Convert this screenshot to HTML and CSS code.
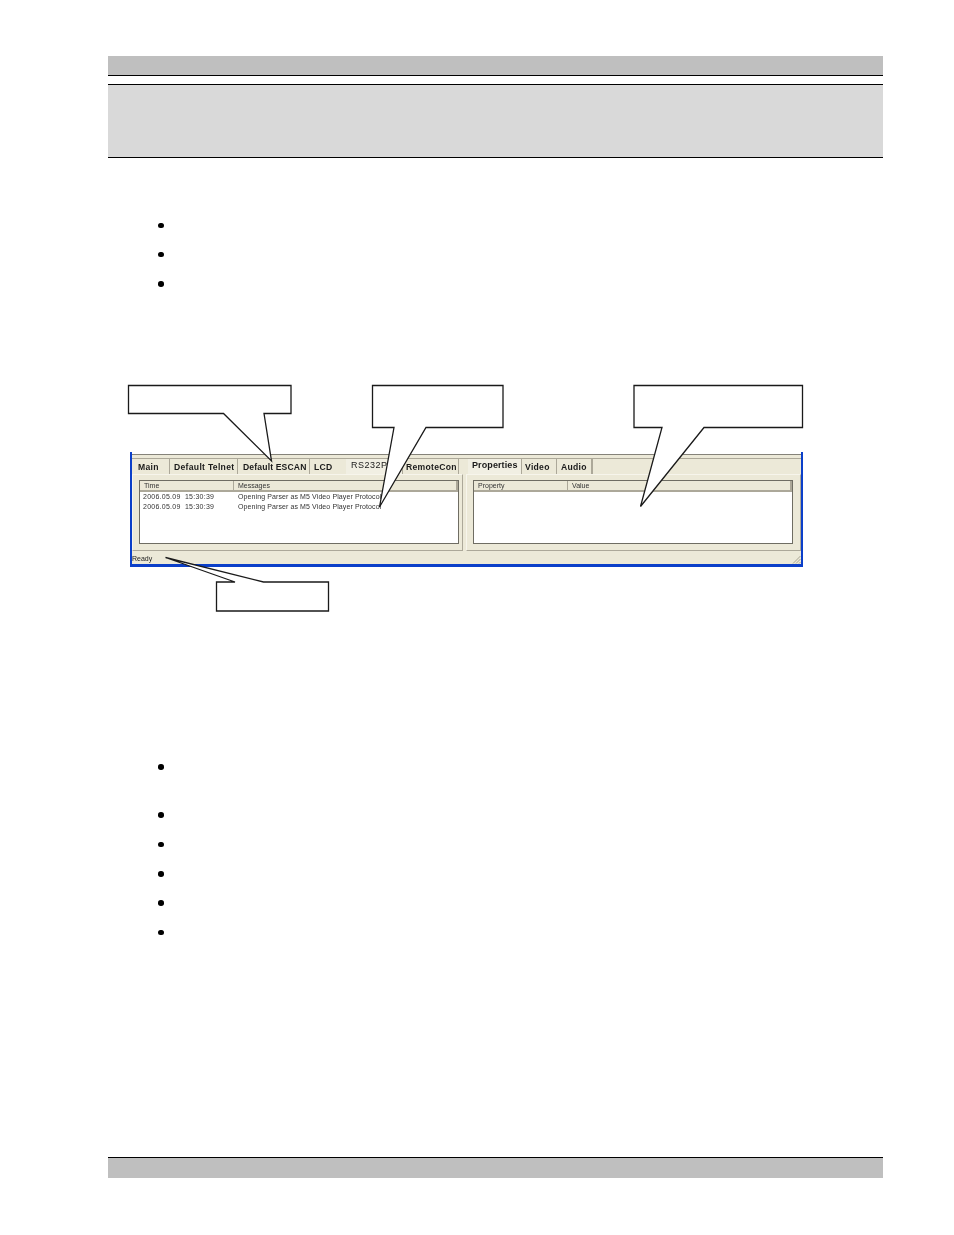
FILE: index.html
```html
<!DOCTYPE html>
<html lang="en">
<head>
<meta charset="utf-8">
<title>Manual page</title>
<link rel="stylesheet" href="styles.css">
</head>
<body>
<div class="page">
  <div class="top-bar"></div>
  <div class="title-bar"></div>

  <ul class="bullets first-list">
    <li></li>
    <li></li>
    <li></li>
  </ul>

  <div class="figure">
    <div class="window">
      <div class="window-top"></div>
      <div class="panes">
        <section class="pane pane-left">
          <div class="tabs">
            <span class="tab t-main">Main</span>
            <span class="tab t-telnet">Default Telnet</span>
            <span class="tab t-escan">Default ESCAN</span>
            <span class="tab t-lcd">LCD</span>
            <span class="tab active t-rs">RS232P</span>
            <span class="tab t-remote">RemoteCon</span>
          </div>
          <div class="frame">
            <div class="list">
              <div class="list-head">
                <span class="col col-time">Time</span>
                <span class="col">Messages</span>
              </div>
              <div class="row"><span class="col-time">2006.05.09&nbsp; 15:30:39</span><span class="msg">Opening Parser as M5 Video Player Protocol</span></div>
              <div class="row"><span class="col-time">2006.05.09&nbsp; 15:30:39</span><span class="msg">Opening Parser as M5 Video Player Protocol</span></div>
            </div>
          </div>
        </section>
        <section class="pane pane-right">
          <div class="tabs">
            <span class="tab active t-props">Properties</span>
            <span class="tab t-video">Video</span>
            <span class="tab t-audio">Audio</span>
          </div>
          <div class="frame">
            <div class="list">
              <div class="list-head">
                <span class="col col-prop">Property</span>
                <span class="col">Value</span>
              </div>
            </div>
          </div>
        </section>
      </div>
      <div class="status">
        <span class="status-text">Ready</span>
        <svg class="grip" viewBox="0 0 9 9" width="9" height="9" aria-hidden="true">
          <path d="M1 8.5 8.5 1M4 8.5 8.5 4M7 8.5 8.5 7" stroke="#a8a491" stroke-width="1" fill="none"/>
        </svg>
      </div>
    </div>
    <svg class="callouts" viewBox="0 0 775 240" width="775" height="240" aria-hidden="true">
      <path class="callout" d="M20.5 .5H183V28.5H156L163.5 76 115.5 28.5H20.5Z"/>
      <path class="callout" d="M264.5 .5H395V42.5H318L271.5 122 286 42.5H264.5Z"/>
      <path class="callout" d="M526 .5H694.5V42.5H596L532.5 121.5 554 42.5H526Z"/>
      <path class="callout" d="M108.5 197H127L57.5 172.5 155.5 197H220.5V226H108.5Z"/>
    </svg>
  </div>

  <ul class="bullets second-list">
    <li class="tall"></li>
    <li></li>
    <li></li>
    <li></li>
    <li></li>
    <li></li>
  </ul>

  <div class="bottom-bar"></div>
</div>
</body>
</html>
```

FILE: styles.css
```css
html, body {
  margin: 0;
  padding: 0;
  background: #fff;
}

body {
  font-family: "Liberation Sans", Arial, sans-serif;
  color: #000;
}

.page {
  box-sizing: border-box;
  width: 775px;
  height: 1235px;
  margin-left: 108px;
  padding-top: 56px;
  overflow: hidden;
}

.top-bar {
  height: 19px;
  background: #bfbfbf;
  border-bottom: 1px solid #000;
}

.title-bar {
  height: 72px;
  margin-top: 8px;
  background: #d9d9d9;
  border-top: 1px solid #000;
  border-bottom: 1px solid #000;
}

.bullets {
  list-style: none;
  margin: 0;
  padding: 0 0 0 50px;
}

.bullets li {
  height: 29.3px;
}

.bullets li::before {
  content: "";
  display: block;
  width: 5.6px;
  height: 5.6px;
  border-radius: 50%;
  background: #000;
}

.bullets li.tall {
  height: 48px;
}

.first-list {
  margin-top: 64.5px;
}

.second-list {
  margin-top: 152.5px;
}

.figure {
  position: relative;
  height: 227px;
  margin-top: 74.6px;
}

.callouts {
  position: absolute;
  left: 0;
  top: 0;
  overflow: visible;
}

.callout {
  fill: #fff;
  stroke: #1a1a1a;
  stroke-width: 1.3;
  stroke-linejoin: miter;
}

.window {
  box-sizing: border-box;
  width: 673px;
  height: 115px;
  margin-left: 22px;
  position: relative;
  top: 67px;
  display: flex;
  flex-direction: column;
  background: #ece9d8;
  border-left: 2px solid #0b3fc9;
  border-right: 2px solid #0b3fc9;
  border-bottom: 3px solid #0b3fc9;
  filter: blur(0.4px);
  font-size: 7px;
}

.window-top {
  height: 6px;
  background: #ece9d8;
  border-top: 2px solid #fff;
  box-shadow: inset 0 1px 0 #85837a;
  box-sizing: border-box;
}

.panes {
  display: flex;
  height: 93px;
  border-top: 1px solid #aca899;
  box-sizing: border-box;
  gap: 3px;
}

.pane-left {
  width: 331px;
}

.pane-right {
  width: 335px;
}

.tabs {
  display: flex;
  height: 15px;
  padding-left: 2px;
  box-sizing: border-box;
}

.tab {
  box-sizing: border-box;
  height: 15px;
  padding: 3.5px 0 0 4px;
  font-weight: bold;
  font-size: 8.6px;
  line-height: 11px;
  letter-spacing: .3px;
  color: #1a1a1a;
  white-space: nowrap;
  border-right: 1px solid #aca899;
}

.tab.active {
  padding-top: 1.5px;
  font-size: 9px;
  letter-spacing: .1px;
  border-right: 1px solid #aca899;
  background: #f1efe3;
}

.t-main { width: 36px; }
.t-telnet { width: 68px; }
.tab.t-escan { width: 72px; padding-left: 5px; letter-spacing: .15px; }
.t-lcd { width: 36px; border-right: 0; }
.tab.t-rs { width: 57px; padding-left: 5px; font-weight: normal; letter-spacing: .5px; }
.t-remote { width: 56px; padding-left: 3px; }

.t-props { width: 54px; padding-left: 4px; }
.t-video { width: 35px; padding-left: 3px; }
.t-audio { width: 36px; border-right: 2px solid #aca899; }

.frame {
  box-sizing: border-box;
  height: 77px;
  padding: 5px 3px 6px 6px;
  border-top: 1px solid #f7f5ec;
  border-bottom: 1px solid #aca899;
  border-right: 1px solid #aca899;
  border-left: 1px solid #f7f5ec;
}

.pane-right .frame {
  padding-right: 7px;
}

.list {
  box-sizing: border-box;
  height: 64px;
  background: #fff;
  border: 1px solid #6f6d63;
  color: #333;
}

.list-head {
  display: flex;
  height: 11px;
  background: #ece9d8;
  border-bottom: 2px solid #aca899;
  border-right: 2px solid #aca899;
  box-sizing: border-box;
  line-height: 10px;
}

.col {
  padding-left: 4px;
}

.list-head .col-time,
.col-prop {
  width: 94px;
  box-sizing: border-box;
  border-right: 1px solid #aca899;
}

.row {
  display: flex;
  height: 10px;
  line-height: 10px;
  white-space: nowrap;
}

.row .col-time {
  width: 94px;
  box-sizing: border-box;
  padding-left: 3px;
  letter-spacing: .25px;
}

.msg {
  padding-left: 4px;
  letter-spacing: .1px;
}

.status {
  flex: 1;
  display: flex;
  align-items: flex-end;
  justify-content: space-between;
  color: #222;
  line-height: 10px;
}

.status-text {
  padding-bottom: 0;
}

.bottom-bar {
  height: 20px;
  margin-top: 198.5px;
  background: #bfbfbf;
  border-top: 1px solid #000;
}
```
